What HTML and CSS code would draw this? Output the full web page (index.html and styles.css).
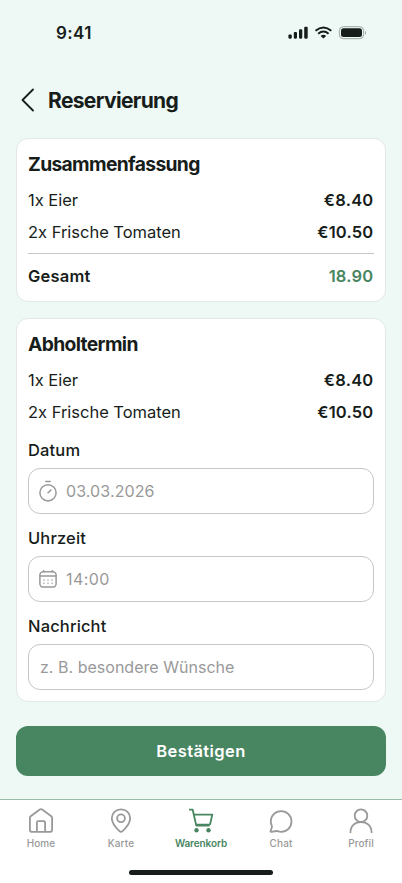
FILE: index.html
```html
<!DOCTYPE html>
<html lang="de">
<head>
<meta charset="utf-8">
<meta name="viewport" content="width=device-width, initial-scale=1">
<title>Reservierung</title>
<link rel="stylesheet" href="styles.css">
</head>
<body>
<div class="screen">
  <div class="status">
    <span class="time">9:41</span>
    <svg class="status-icons" width="80" height="14" viewBox="0 0 80 14">
      <g fill="#171d1a">
        <rect x="0.4" y="8.4" width="3.4" height="4.3" rx="1.1"/>
        <rect x="5.8" y="5.9" width="3.2" height="6.8" rx="1.1"/>
        <rect x="11" y="3.3" width="3.3" height="9.4" rx="1.1"/>
        <rect x="16.2" y=".7" width="3.5" height="12" rx="1.1"/>
        <path d="M35.4 12.6 32.6 9.9Q35.4 7.8 38.2 9.9Z"/>
        <rect x="53" y="2.3" width="21" height="8.8" rx="2.5"/>
      </g>
      <g fill="none" stroke="#171d1a" stroke-width="2">
        <path d="M27.5 4.8Q35.4 -1.9 43.3 4.8"/>
        <path d="M30.2 7.7Q35.4 3.3 40.6 7.7"/>
      </g>
      <rect x="51.4" y=".7" width="24.2" height="12" rx="3.9" fill="none" stroke="#9ca5a0"/>
      <path d="M77 4.8v4Q79.3 6.8 77 4.8Z" fill="#9ca5a0"/>
    </svg>
  </div>

  <header class="header">
    <svg class="back" width="14" height="24" viewBox="0 0 14 24"><path d="M12 1.5 1.5 12 12 22.500" fill="none" stroke="currentColor" stroke-width="1.8" stroke-linecap="round" stroke-linejoin="round"/></svg>
    <h1>Reservierung</h1>
  </header>

  <main class="content">
    <section class="card">
      <h2>Zusammenfassung</h2>
      <div class="row"><span>1x Eier</span><b>€8.40</b></div>
      <div class="row"><span>2x Frische Tomaten</span><b>€10.50</b></div>
      <div class="row total"><b>Gesamt</b><b class="sum">18.90</b></div>
    </section>

    <section class="card">
      <h2>Abholtermin</h2>
      <div class="row"><span>1x Eier</span><b>€8.40</b></div>
      <div class="row"><span>2x Frische Tomaten</span><b>€10.50</b></div>
      <div class="field">
        <span class="label">Datum</span>
        <div class="input">
          <svg width="18" height="22" viewBox="0 0 18 22" fill="none" stroke="currentColor" stroke-width="1.5" stroke-linecap="round"><circle cx="9" cy="12.8" r="8.1"/><path d="M6.8 1.5h4.4M9 12.8l2.9-2.7"/></svg>
          <span>03.03.2026</span>
        </div>
      </div>
      <div class="field">
        <span class="label">Uhrzeit</span>
        <div class="input">
          <svg width="18" height="18" viewBox="0 0 18 18" fill="none" stroke="currentColor" stroke-width="1.5" stroke-linecap="round"><rect x=".9" y="1.7" width="16.2" height="15.4" rx="3.4"/><path d="M.9 6.1h16.2M4.7.7v1M13.3.7v1"/><path d="M5 10h.01M9 10h.01M13 10h.01M5 13.3h.01M9 13.3h.01M13 13.3h.01"/></svg>
          <span class="clock">14:00</span>
        </div>
      </div>
      <div class="field">
        <span class="label">Nachricht</span>
        <div class="input message"><span>z. B. besondere Wünsche</span></div>
      </div>
    </section>

    <button class="confirm" type="button">Bestätigen</button>
  </main>

  <nav class="tabs">
    <div class="tab">
      <svg width="28" height="28" viewBox="0 0 28 28" fill="none" stroke="currentColor" stroke-width="1.8" stroke-linejoin="round"><path d="M2.9 10.8q0-1 .8-1.6L12.8 2.6q1.2-.8 2.4 0l9.1 6.6q.8.6.8 1.6V22.7q0 2.2-2.2 2.2H5.1q-2.2 0-2.2-2.2Z"/><path d="M9.9 24.9V15.5q0-1.400 1.400-1.400h5.400q1.400 0 1.400 1.400v9.400"/></svg>
      <span>Home</span>
    </div>
    <div class="tab">
      <svg width="28" height="28" viewBox="0 0 28 28" fill="none" stroke="currentColor" stroke-width="1.8"><path d="M14 2.3c-5.2 0-9.2 4-9.2 9 0 5.5 4.5 9.9 7.6 12.8q1.6 1.4 3.2 0c3.1-2.9 7.6-7.3 7.6-12.8 0-5-4-9-9.2-9Z"/><circle cx="14" cy="11.3" r="3.9"/></svg>
      <span>Karte</span>
    </div>
    <div class="tab active">
      <svg width="28" height="28" viewBox="0 0 28 28" fill="none" stroke="currentColor" stroke-width="1.8" stroke-linejoin="round"><path d="M2 2.7h3.7L9.3 18.6h13.2"/><path d="M6.9 7.6h18.4l-2.1 9.1q-.2.9-1.1.9H9.2"/><g fill="currentColor" stroke="none"><circle cx="9.5" cy="23.2" r="2.2"/><circle cx="21.5" cy="23.2" r="2.2"/></g></svg>
      <span>Warenkorb</span>
    </div>
    <div class="tab">
      <svg width="28" height="28" viewBox="0 0 28 28" fill="none" stroke="currentColor" stroke-width="1.8" stroke-linejoin="round"><path d="M14.1 4.2c-5.8 0-10.3 4.6-10.3 10.3 0 1.5.5 2.9 1 4.2q.3.9 0 1.8L3.6 24q-.4 1.1.8.9l5.1-.9q.6-.1 1.1.1c1.1.5 2.3.7 3.500.7 5.800 0 10.400-4.600 10.400-10.300S19.900 4.200 14.100 4.200Z"/></svg>
      <span>Chat</span>
    </div>
    <div class="tab">
      <svg width="28" height="28" viewBox="0 0 28 28" fill="none" stroke="currentColor" stroke-width="1.8"><circle cx="14" cy="8.7" r="6.3"/><path d="M3.4 25.900C3.400 18.500 8.300 15 14 15s10.600 3.500 10.600 10.900"/></svg>
      <span>Profil</span>
    </div>
  </nav>
  <div class="home-bar"></div>
</div>
</body>
</html>
```
FILE: styles.css
```css
* { box-sizing: border-box; }

body {
  margin: 0;
  background: #eef8f4;
  color: #171d1a;
  font-family: Inter, "Liberation Sans", sans-serif;
  font-size: 16px;
  line-height: 24px;
}

.screen {
  width: 402px;
  height: 883px;
  display: flex;
  flex-direction: column;
  overflow: hidden;
}

.status {
  height: 65px;
  padding: 0 34px 0 56px;
  display: flex;
  align-items: center;
  justify-content: space-between;
}

.time { font-size: 17px; font-weight: 600; letter-spacing: .4px; }

.header {
  height: 73px;
  padding: 0 21px 3px;
  display: flex;
  align-items: center;
  gap: 13px;
}

h1, h2 { margin: 0; font-weight: 700; }
h1 { font-size: 21px; letter-spacing: -.65px; padding-top: 2px; }
h2 { font-size: 19.25px; line-height: 28px; letter-spacing: -.65px; margin-bottom: 10px; }

.content {
  padding: 0 16px;
  display: flex;
  flex-direction: column;
}

.card {
  padding: 11px;
  margin-bottom: 16px;
  border: 1px solid #e3e8e5;
  border-radius: 12px;
  background: #fff;
}

.row {
  display: flex;
  justify-content: space-between;
  margin-bottom: 8px;
  font-size: 16.5px;
  letter-spacing: -.02px;
}

.row b { font-weight: 600; letter-spacing: .2px; }
.row b:last-child { padding-right: .6px; }

.total {
  border-top: 1px solid #c6c6c6;
  padding-top: 10px;
  margin: 9px 0 2px;
}

.total .sum { color: #488661; }

.field + .field { margin-top: 12px; }
.row + .field { margin-top: 14px; }

.label {
  display: block;
  font-size: 16.5px;
  font-weight: 500;
  letter-spacing: .15px;
  margin-bottom: 6px;
}

.input {
  height: 46px;
  padding: 0 10px;
  border: 1px solid #c6c6c6;
  border-radius: 12px;
  display: flex;
  align-items: center;
  gap: 9px;
  color: #999;
  letter-spacing: .1px;
}

.clock { letter-spacing: .4px; }
.message { padding-left: 11px; letter-spacing: .02px; }

.confirm {
  height: 50px;
  margin-top: 8px;
  padding-bottom: 2px;
  border: 0;
  border-radius: 12px;
  background: #488661;
  color: #fff;
  font: 600 16.5px/24px Inter, "Liberation Sans", sans-serif;
  letter-spacing: .4px;
}

.tabs {
  height: 71px;
  margin-top: 23px;
  padding: 7px 1px 0;
  border-top: 1px solid #9cbcaa;
  background: #fff;
  display: grid;
  grid-template-columns: repeat(5, 1fr);
  flex: none;
}

.tab {
  display: flex;
  flex-direction: column;
  align-items: center;
  font-size: 10px;
  line-height: 14px;
  font-weight: 500;
  letter-spacing: .1px;
  color: #999;
}

.tab span { margin-top: 1px; }
.active { color: #488661; font-weight: 600; letter-spacing: -.1px; }

.home-bar {
  flex: 1;
  background: #fff;
}

.home-bar::before {
  content: "";
  display: block;
  width: 144px;
  height: 5px;
  margin: 0 auto;
  border-radius: 3px;
  background: #171d1a;
}
```
